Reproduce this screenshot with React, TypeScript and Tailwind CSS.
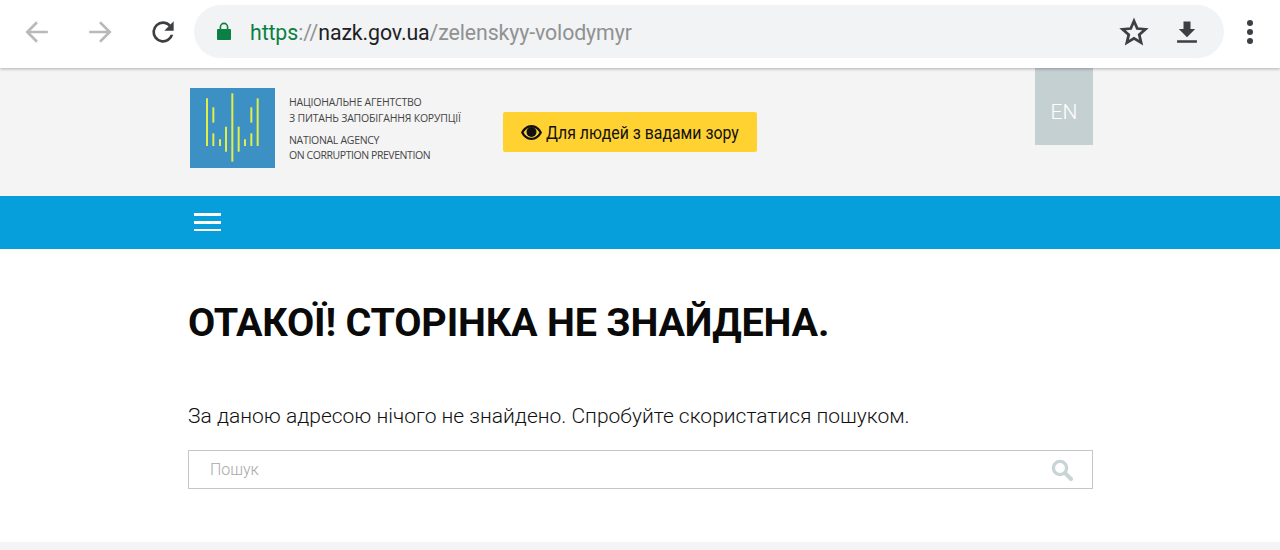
import React from "react";

const logoLines: [number, number, number][] = [
  [81, 55, 198],
  [100, 82, 128],
  [100, 160, 198],
  [120, 178, 198],
  [138, 140, 215],
  [157, 40, 245],
  [176, 140, 215],
  [195, 178, 198],
  [214, 82, 128],
  [214, 160, 198],
  [233, 55, 198],
];

function Logo() {
  return (
    <svg width="85" height="80" viewBox="0 0 85 80" className="shrink-0 block">
      <rect width="85" height="80" fill="#3d90c3" />
      {logoLines.map(([x, a, b], i) => (
        <line
          key={i}
          x1={(x - 30) / 3}
          x2={(x - 30) / 3}
          y1={(a - 24) / 3}
          y2={(b - 24) / 3}
          stroke="#e2ee48"
          strokeWidth="2"
        />
      ))}
    </svg>
  );
}

export default function App() {
  return (
    <div className="h-[550px] overflow-hidden bg-white font-['Roboto',sans-serif]">
      <header className="relative z-10 h-[68px] pb-[5px] bg-white shadow-[0_1px_3px_rgba(0,0,0,0.28)] flex items-center">
        <div className="w-[194px] shrink-0 flex items-center">
          <svg width="26" height="26" viewBox="0 0 24 24" className="ml-[24px] text-[#b9b9b9]" fill="none" stroke="currentColor" strokeWidth="2.4">
            <path d="M22 12H3M12 3l-9 9 9 9" />
          </svg>
          <svg width="26" height="26" viewBox="0 0 24 24" className="ml-[37px] text-[#b9b9b9]" fill="none" stroke="currentColor" strokeWidth="2.4">
            <path d="M2 12h19M12 3l9 9-9 9" />
          </svg>
          <svg width="32" height="32" viewBox="0 0 24 24" className="ml-[34px] text-[#3c4043]" fill="currentColor">
            <path d="M17.65 6.35A7.96 7.96 0 0 0 12 4a8 8 0 1 0 7.73 10h-2.08A6 6 0 1 1 12 6c1.66 0 3.14.69 4.22 1.78L13 11h7V4l-2.35 2.35z" />
          </svg>
        </div>
        <div className="w-[1030px] h-[53px] rounded-full bg-[#f1f3f4] flex items-center">
          <svg width="16" height="20" viewBox="0 0 16 20" className="ml-[22px] text-[#0b8043]" fill="currentColor">
            <path d="M2 7h1.6V5a4.4 4.4 0 0 1 8.8 0v2H14a1 1 0 0 1 1 1v9a1 1 0 0 1-1 1H2a1 1 0 0 1-1-1V8a1 1 0 0 1 1-1zm3.2 0h5.6V5a2.8 2.8 0 0 0-5.6 0v2z" />
          </svg>
          <div className="ml-[18px] mt-[2px] text-[21.3px] leading-none tracking-[-0.1px] text-[#8f9193]">
            <span className="text-[#0b8043]">https</span>
            <span>://</span>
            <span className="text-[#202124]">nazk.gov.ua</span>
            <span>/zelenskyy-volodymyr</span>
          </div>
          <div className="flex-1" />
          <svg width="30" height="30" viewBox="0 0 24 24" className="text-[#3c4043] mr-[24px]" fill="none" stroke="currentColor" strokeWidth="2.2">
            <path d="M12 3.2l2.6 6 6.5.6-4.9 4.3 1.5 6.4L12 17.1l-5.7 3.4 1.5-6.4-4.9-4.3 6.5-.6z" />
          </svg>
          <svg width="28" height="28" viewBox="0 0 24 24" className="text-[#3c4043] mr-[23px]" fill="currentColor">
            <path d="M19 9.5h-4V3H9v6.5H5l7 7 7-7zM3.5 19v2.2h17V19z" />
          </svg>
        </div>
        <div className="ml-[23px] flex flex-col gap-[3px]">
          <span className="block w-[6px] h-[6px] rounded-full bg-[#3c4043]" />
          <span className="block w-[6px] h-[6px] rounded-full bg-[#3c4043]" />
          <span className="block w-[6px] h-[6px] rounded-full bg-[#3c4043]" />
        </div>
      </header>

      <section className="h-[128px] bg-[#f4f4f4]">
        <div className="relative ml-[188px] w-[905px] h-full flex items-start">
          <div className="ml-[2px] mt-[20px] flex">
            <Logo />
            <div className="ml-[14px] w-[172px] whitespace-nowrap font-['Open_Sans',sans-serif] text-[10.5px] leading-[15px] text-[#444]">
              <div className="mt-[7px] tracking-[-0.2px]">НАЦІОНАЛЬНЕ АГЕНТСТВО</div>
              <div className="tracking-[-0.2px] mt-[1px]">З ПИТАНЬ ЗАПОБІГАННЯ КОРУПЦІЇ</div>
              <div className="mt-[7px] tracking-[-0.3px]">NATIONAL AGENCY</div>
              <div className="tracking-[-0.43px]">ON CORRUPTION PREVENTION</div>
            </div>
          </div>
          <button className="ml-[42px] mt-[44px] w-[254px] h-[40px] pl-[18px] rounded-[2px] bg-[#ffd231] flex items-center gap-[4px] text-[18px] text-[#111] font-normal">
            <svg width="21" height="15" viewBox="0 0 21 15" fill="#111" className="shrink-0">
              <path fillRule="evenodd" d="M10.5 0C15.3 0 19 3.4 21 7.5 19 11.6 15.3 15 10.5 15S2 11.6 0 7.5C2 3.4 5.7 0 10.5 0zm0 2.2c-3.4 0-6.3 2.2-7.9 5.3 1.6 3.1 4.5 5.3 7.9 5.3s6.3-2.2 7.9-5.3c-1.6-3.1-4.5-5.3-7.9-5.3z" />
              <circle cx="10.5" cy="7" r="5" />
            </svg>
            <span className="inline-block whitespace-nowrap origin-left scale-x-[0.88]">Для людей з вадами зору</span>
          </button>
          <div className="absolute right-0 top-0 w-[58px] h-[77px] pt-[13px] bg-[#c5d0d3] flex items-center justify-center text-[21px] font-light text-white">
            EN
          </div>
        </div>
      </section>

      <nav className="h-[53px] bg-[#079fdb] flex items-center">
        <div className="ml-[194px] -mt-[1px] w-[27px] flex flex-col gap-[5px]">
          <span className="block h-[3px] bg-white" />
          <span className="block h-[3px] bg-white" />
          <span className="block h-[2px] bg-white" />
        </div>
      </nav>

      <main className="h-[293px] ml-[188px] w-[905px] pt-[50px]">
        <h1 className="text-[39.5px] leading-[48px] font-bold text-[#0a0a0a] tracking-[-0.2px]">
          ОТАКОЇ! СТОРІНКА НЕ ЗНАЙДЕНА.
        </h1>
        <p className="mt-[57px] text-[21px] leading-[24px] font-light text-[#111]">
          За даною адресою нічого не знайдено. Спробуйте скористатися пошуком.
        </p>
        <div className="mt-[22px] h-[39px] border border-[#c6c6c6] flex items-center justify-between pl-[21px] pr-[19px]">
          <span className="text-[16px] font-light text-[#a8a8a8]">Пошук</span>
          <svg width="22" height="22" viewBox="0 0 22 22" fill="none" stroke="#c9d4d6" className="shrink-0">
            <circle cx="9" cy="9" r="6.6" strokeWidth="3.4" />
            <path d="M14 14l6 6" strokeWidth="4" strokeLinecap="round" />
          </svg>
        </div>
      </main>

      <footer className="h-[8px] bg-[#f4f4f4]" />
    </div>
  );
}
